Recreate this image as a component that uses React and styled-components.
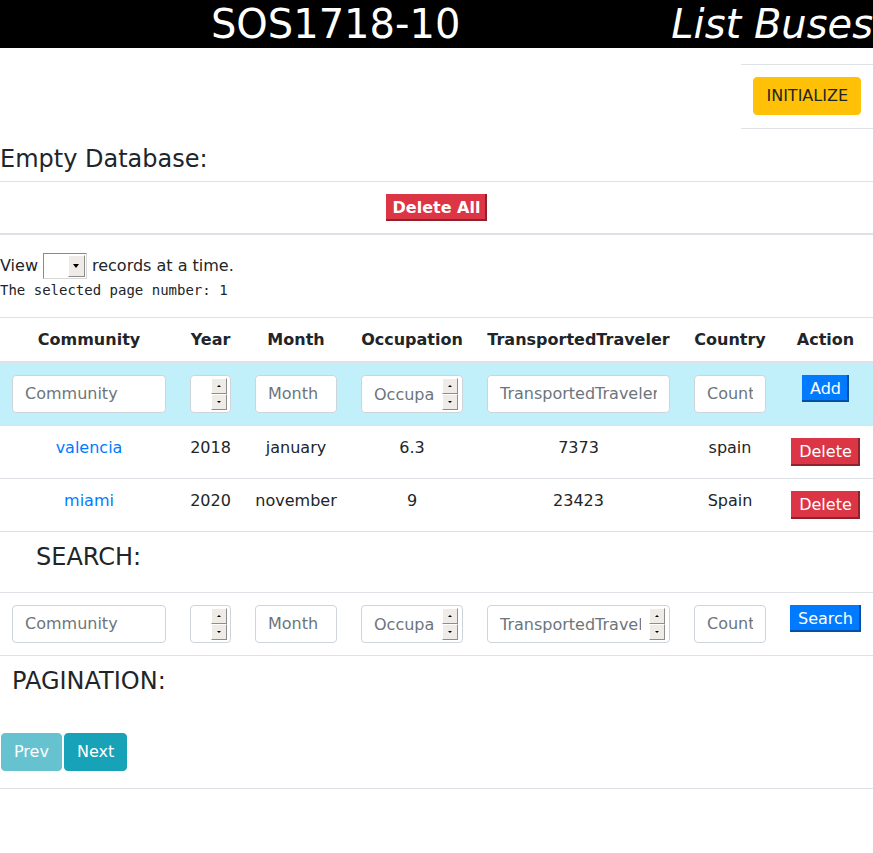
import React from "react";
import styled, { createGlobalStyle } from "styled-components";

const GlobalStyle = createGlobalStyle`
  html, body { margin: 0; padding: 0; background: #fff; }
  body {
    font-family: "DejaVu Sans", "Noto Sans", sans-serif;
    font-size: 16px;
    line-height: 1.5;
    color: #212529;
  }
  * { box-sizing: border-box; }
`;

const rows = [
  { community: "valencia", year: 2018, month: "january", occupation: "6.3", traveler: "7373", country: "spain" },
  { community: "miami", year: 2020, month: "november", occupation: "9", traveler: "23423", country: "Spain" },
];

const widths = [178, 65, 106, 126, 207, 96, 95];

const Header = styled.header`
  display: flex;
  background: #000;
  color: #fff;
  height: 48px;
`;

const Title = styled.h1`
  margin: 0;
  font-size: 40px;
  font-weight: 400;
  line-height: 48px;
  text-align: center;
  font-style: ${(p) => (p.$italic ? "italic" : "normal")};
  flex: ${(p) => (p.$italic ? "0 0 auto" : "1")};
`;

const InitBox = styled.div`
  display: flex;
  justify-content: flex-end;
  margin-top: 16px;
`;

const InitCell = styled.div`
  display: flex;
  border-top: 1px solid #dee2e6;
  border-bottom: 1px solid #dee2e6;
  padding: 12px 12px 13px;
`;

const Button = styled.button`
  font-family: inherit;
  font-size: 16px;
  line-height: 24px;
  height: 38px;
  padding: 6px 12px;
  border: 1px solid ${(p) => p.$bg};
  border-radius: 4px;
  background: ${(p) => p.$bg};
  color: ${(p) => p.$fg || "#fff"};
  opacity: ${(p) => (p.$faded ? 0.65 : 1)};
  cursor: pointer;
`;

const FlatButton = styled.button`
  display: inline-block;
  vertical-align: top;
  height: ${(p) => (p.$tall ? 28 : 27)}px;
  font-family: inherit;
  font-size: 16px;
  font-weight: ${(p) => (p.$bold ? 700 : 400)};
  line-height: 19px;
  padding: 4px ${(p) => (p.$bold ? 7 : 8)}px;
  border: none;
  border-radius: 0;
  background: ${(p) => p.$bg};
  color: #fff;
  box-shadow: inset -2px -2px 0 rgba(0, 0, 0, 0.35);
  cursor: pointer;
`;

const SectionTitle = styled.h4`
  margin: ${(p) => p.$margin || "0"};
  padding: ${(p) => p.$pad || "0"};
  font-size: 24px;
  font-weight: 400;
  line-height: 1.2;
`;

const DeleteAllRow = styled.div`
  display: flex;
  justify-content: center;
  padding: 12px;
  border-top: 1px solid #dee2e6;
  border-bottom: 2px solid #dee2e6;
`;

const ViewLine = styled.div`
  display: flex;
  align-items: center;
  gap: 5px;
  margin-top: 17px;
  height: 28px;
`;

const FakeSelect = styled.div`
  display: flex;
  width: 44px;
  height: 26px;
  border: 1px solid #8a8a8a;
  border-right-color: #d8d8d8;
  border-bottom-color: #d8d8d8;
  background: #fff;
  justify-content: flex-end;
  padding: 1px;
`;

const SelectArrow = styled.div`
  width: 17px;
  display: flex;
  align-items: center;
  justify-content: center;
  background: #efebe7;
  border: 1px solid #fff;
  border-right-color: #8d8d8d;
  border-bottom-color: #8d8d8d;
  &::after {
    content: "";
    border-left: 3.5px solid transparent;
    border-right: 3.5px solid transparent;
    border-top: 4px solid #000;
  }
`;

const PageNote = styled.div`
  font-family: "DejaVu Sans Mono", monospace;
  font-size: 14px;
  line-height: 20px;
`;

const Table = styled.table`
  width: 100%;
  border-collapse: collapse;
  table-layout: fixed;
  margin-top: ${(p) => p.$top || 0}px;
`;

const Th = styled.th`
  padding: 12px 0;
  line-height: 19px;
  font-weight: 700;
  text-align: center;
  border-top: 1px solid #dee2e6;
  border-bottom: 2px solid #dee2e6;
  white-space: nowrap;
`;

const Tr = styled.tr`
  background: ${(p) => p.$bg || "transparent"};
  border-bottom: 1px solid #dee2e6;
`;

const Td = styled.td`
  padding: 12px;
  line-height: 19px;
  text-align: center;
  vertical-align: top;
`;

const Link = styled.a`
  color: #007bff;
  text-decoration: none;
`;

const Input = styled.input`
  display: block;
  width: 100%;
  height: 38px;
  padding: 6px 12px;
  font-family: inherit;
  font-size: 16px;
  line-height: 24px;
  border: 1px solid #ced4da;
  border-radius: 4px;
  background: #fff;
  color: #495057;
  &::placeholder { color: #6c757d; }
`;

const NumberBox = styled.div`
  display: flex;
  align-items: flex-start;
  height: 38px;
  width: 100%;
  border: 1px solid #ced4da;
  border-radius: 4px;
  background: #fff;
  padding: 2px 4px 0 0;
`;

const BareInput = styled.input`
  flex: 1;
  min-width: 0;
  border: none;
  outline: none;
  background: transparent;
  padding: 5px 0 6px 12px;
  margin-right: 8px;
  font-family: inherit;
  font-size: 16px;
  line-height: 24px;
  &::placeholder { color: #6c757d; }
`;

const Spinner = styled.div`
  display: flex;
  flex-direction: column;
  flex: 0 0 16px;
`;

const SpinButton = styled.div`
  height: 16px;
  display: flex;
  align-items: center;
  justify-content: center;
  background: #efebe7;
  border: 1px solid #fff;
  border-right-color: #8d8d8d;
  border-bottom-color: #8d8d8d;
  &::after {
    content: "";
    border-left: 2.5px solid transparent;
    border-right: 2.5px solid transparent;
    ${(p) => (p.$up ? "border-bottom" : "border-top")}: 2.5px solid #000;
  }
`;

const SearchHead = styled.div`
  height: 61px;
  padding: 11px 0 0 36px;
  border-bottom: 1px solid #dee2e6;
`;

const Pagination = styled.div`
  border-bottom: 1px solid #dee2e6;
  padding-bottom: 17px;
`;

const PagerButtons = styled.div`
  display: flex;
  gap: 2px;
  margin: 37px 0 0 1px;
`;

function NumberField({ placeholder }) {
  return (
    <NumberBox>
      <BareInput placeholder={placeholder} />
      <Spinner>
        <SpinButton $up />
        <SpinButton />
      </Spinner>
    </NumberBox>
  );
}

function Cols() {
  return (
    <colgroup>
      {widths.map((w, i) => (
        <col key={i} style={{ width: w }} />
      ))}
    </colgroup>
  );
}

export default function App() {
  return (
    <>
      <GlobalStyle />
      <Header>
        <Title>SOS1718-10</Title>
        <Title $italic>List Buses</Title>
      </Header>

      <InitBox>
        <InitCell>
          <Button $bg="#ffc107" $fg="#212529">INITIALIZE</Button>
        </InitCell>
      </InitBox>

      <SectionTitle $margin="16px 0 7px">Empty Database:</SectionTitle>
      <DeleteAllRow>
        <FlatButton $bg="#dc3545" $bold>Delete All</FlatButton>
      </DeleteAllRow>

      <ViewLine>
        <span>View</span>
        <FakeSelect>
          <SelectArrow />
        </FakeSelect>
        <span>records at a time.</span>
      </ViewLine>
      <PageNote>The selected page number: 1</PageNote>

      <Table $top={17}>
        <Cols />
        <thead>
          <tr>
            <Th>Community</Th>
            <Th>Year</Th>
            <Th>Month</Th>
            <Th>Occupation</Th>
            <Th>TransportedTraveler</Th>
            <Th>Country</Th>
            <Th>Action</Th>
          </tr>
        </thead>
        <tbody>
          <Tr $bg="#c1f0fb">
            <Td><Input placeholder="Community" /></Td>
            <Td><NumberField /></Td>
            <Td><Input placeholder="Month" /></Td>
            <Td><NumberField placeholder="Occupation" /></Td>
            <Td><Input placeholder="TransportedTraveler" /></Td>
            <Td><Input placeholder="Country" /></Td>
            <Td><FlatButton $bg="#007bff">Add</FlatButton></Td>
          </Tr>
          {rows.map((r) => (
            <Tr key={r.community}>
              <Td><Link href="#">{r.community}</Link></Td>
              <Td>{r.year}</Td>
              <Td>{r.month}</Td>
              <Td>{r.occupation}</Td>
              <Td>{r.traveler}</Td>
              <Td>{r.country}</Td>
              <Td><FlatButton $bg="#dc3545" $tall>Delete</FlatButton></Td>
            </Tr>
          ))}
        </tbody>
      </Table>

      <SearchHead>
        <SectionTitle>SEARCH:</SectionTitle>
      </SearchHead>
      <Table>
        <Cols />
        <tbody>
          <Tr>
            <Td><Input placeholder="Community" /></Td>
            <Td><NumberField /></Td>
            <Td><Input placeholder="Month" /></Td>
            <Td><NumberField placeholder="Occupation" /></Td>
            <Td><NumberField placeholder="TransportedTraveler" /></Td>
            <Td><Input placeholder="Country" /></Td>
            <Td><FlatButton $bg="#007bff">Search</FlatButton></Td>
          </Tr>
        </tbody>
      </Table>

      <Pagination>
        <SectionTitle $pad="11px 0 0 12px">PAGINATION:</SectionTitle>
        <PagerButtons>
          <Button $bg="#17a2b8" $faded>Prev</Button>
          <Button $bg="#17a2b8">Next</Button>
        </PagerButtons>
      </Pagination>
    </>
  );
}
